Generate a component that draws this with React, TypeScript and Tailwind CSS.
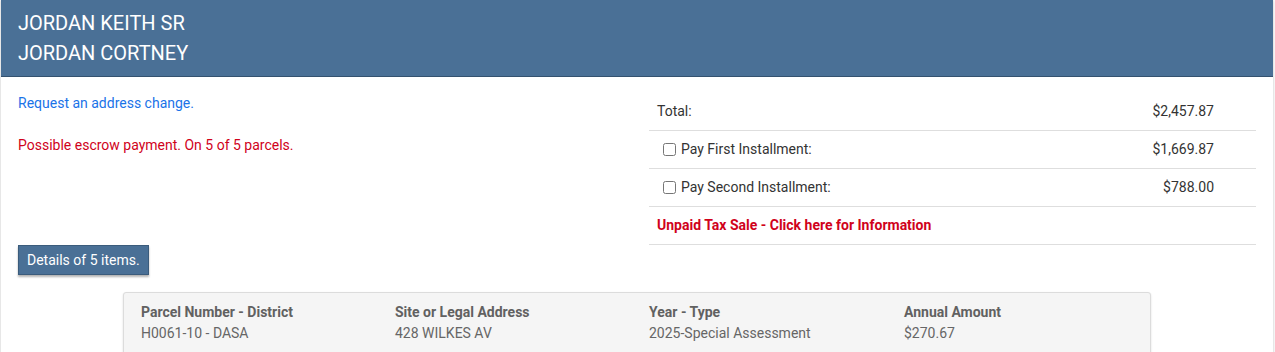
import React from "react";

const cols = [
  { h: "Parcel Number - District", v: "H0061-10 - DASA" },
  { h: "Site or Legal Address", v: "428 WILKES AV" },
  { h: "Year - Type", v: "2025-Special Assessment" },
  { h: "Annual Amount", v: "$270.67" },
];

export default function App() {
  return (
    <div
      className="w-[1275px] h-[352px] overflow-hidden bg-white"
      style={{ fontFamily: "Roboto, 'Liberation Sans', sans-serif" }}
    >
      <div className="w-[1272px] min-h-[400px] bg-white shadow-[0_0_3px_rgba(0,0,0,0.25)] ml-[1px]">
        <div className="bg-[#4a7096] h-[77px] border-b border-[#34526f] px-[17px] pt-[8px] text-white text-[20px] leading-[30px]">
          <div>JORDAN KEITH SR</div>
          <div>JORDAN CORTNEY</div>
        </div>
        <div className="flex px-[17px] pt-[15px]">
          <div className="w-[631px] text-[14px] leading-[20px]">
            <div className="text-[#1a73e8] mt-[1px]">Request an address change.</div>
            <div className="text-[#d0021b] mt-[22px]">Possible escrow payment. On 5 of 5 parcels.</div>
          </div>
          <div className="w-[607px] mt-[1px] text-[14px] text-[#333]">
            <div className="flex items-center justify-between h-[38px] border-b border-[#dedede] pl-[8px] pr-[42px]">
              <span>Total:</span>
              <span>$2,457.87</span>
            </div>
            <div className="flex items-center justify-between h-[38px] border-b border-[#dedede] pl-[14px] pr-[42px]">
              <label className="flex items-center gap-[5px]">
                <input type="checkbox" className="w-[13px] h-[13px] m-0" />
                <span>Pay First Installment:</span>
              </label>
              <span>$1,669.87</span>
            </div>
            <div className="flex items-center justify-between h-[38px] border-b border-[#dedede] pl-[14px] pr-[42px]">
              <label className="flex items-center gap-[5px]">
                <input type="checkbox" className="w-[13px] h-[13px] m-0" />
                <span>Pay Second Installment:</span>
              </label>
              <span>$788.00</span>
            </div>
            <div className="flex items-center h-[38px] border-b border-[#dedede] pl-[8px] text-[#d0021b] font-bold">
              Unpaid Tax Sale - Click here for Information
            </div>
          </div>
        </div>
        <div className="px-[17px]">
          <button className="h-[30px] px-[8px] pt-[1px] bg-[#4a7096] text-white text-[14px] border border-[#3b5c7c] shadow-[0_2px_2px_rgba(0,0,0,0.3)]">
            Details of 5 items.
          </button>
        </div>
        <div className="ml-[122px] mt-[17px] w-[1028px] bg-[#f5f5f5] border border-[#dcdcdc] rounded-[3px] shadow-[0_1px_2px_rgba(0,0,0,0.15)] px-[17px] pt-[9px] pb-[10px] grid grid-cols-[254px_254px_255px_1fr] text-[14px] leading-[21px]">
          {cols.map((c) => (
            <div key={c.h}>
              <div className="font-bold text-[#616161]">{c.h}</div>
              <div className="text-[#666]">{c.v}</div>
            </div>
          ))}
        </div>
      </div>
    </div>
  );
}
